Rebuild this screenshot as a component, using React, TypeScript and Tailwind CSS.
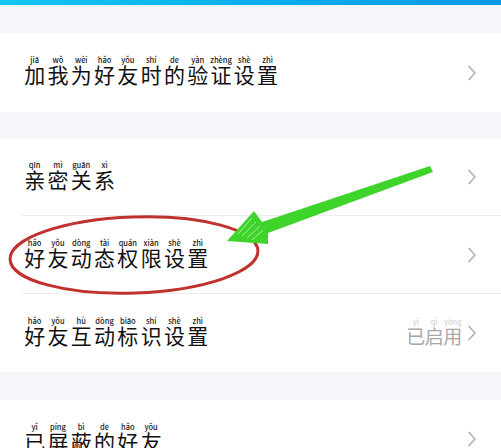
import React from 'react';

type Ch = [string, string];

const rows1: Ch[] = [
    ['加', 'jiā'], ['我', 'wǒ'], ['为', 'wèi'], ['好', 'hǎo'], ['友', 'yǒu'], ['时', 'shí'],
    ['的', 'de'], ['验', 'yàn'], ['证', 'zhèng'], ['设', 'shè'], ['置', 'zhì'],
];
const rowQinmi: Ch[] = [['亲', 'qīn'], ['密', 'mì'], ['关', 'guān'], ['系', 'xì']];
const rowDongtai: Ch[] = [
    ['好', 'hǎo'], ['友', 'yǒu'], ['动', 'dòng'], ['态', 'tài'], ['权', 'quán'], ['限', 'xiàn'], ['设', 'shè'], ['置', 'zhì'],
];
const rowHudong: Ch[] = [
    ['好', 'hǎo'], ['友', 'yǒu'], ['互', 'hù'], ['动', 'dòng'], ['标', 'biāo'], ['识', 'shí'], ['设', 'shè'], ['置', 'zhì'],
];
const rowPingbi: Ch[] = [['已', 'yǐ'], ['屏', 'píng'], ['蔽', 'bì'], ['的', 'de'], ['好', 'hǎo'], ['友', 'yǒu']];
const enabled: Ch[] = [['已', 'yǐ'], ['启', 'qǐ'], ['用', 'yòng']];

const Pinyin = ({ chars, muted }: { chars: Ch[]; muted?: boolean }) => (
    <div className="flex -translate-y-[2px]">
        {chars.map(([c, p], i) => (
            <div key={i} className={`flex flex-col items-center ${muted ? 'w-[18.5px]' : 'w-[23.3px]'}`}>
                <span className={`text-[7.5px] leading-[8px] whitespace-nowrap font-medium ${muted ? 'text-[#d4d4d4]' : 'text-[#1a1a1a]'}`}>{p}</span>
                <span className={`leading-none ${muted ? 'text-[19px] text-[#a8a8a8]' : 'text-[21px] text-[#111]'}`}>{c}</span>
            </div>
        ))}
    </div>
);

const Chevron = () => (
    <svg width="10" height="16" viewBox="0 0 10 16" className="shrink-0">
        <path d="M2 1.5 L8 8 L2 14.5" fill="none" stroke="#b5b5b5" strokeWidth="1.8" strokeLinecap="round" strokeLinejoin="round" />
    </svg>
);

const Row = ({ chars, right, divider, h = 'h-[78px]' }: { chars: Ch[]; right?: React.ReactNode; divider?: boolean; h?: string }) => (
    <div className={`relative flex items-center justify-between pl-[23px] pr-[24px] bg-white ${h}`}>
        <Pinyin chars={chars} />
        <div className="flex items-center gap-[5px]">
            {right}
            <Chevron />
        </div>
        {divider && <div className="absolute bottom-0 left-[22px] right-0 h-px bg-[#ececec]" />}
    </div>
);

export default function App() {
    return (
        <div className="relative w-[501px] h-[448px] overflow-hidden bg-[#f5f6fa]" style={{ fontFamily: '"Noto Sans CJK SC", "Noto Sans", sans-serif' }}>
            <div className="h-[5px] bg-gradient-to-r from-[#14c6f3] to-[#0b98e6]" />
            <div className="h-[28px]" />
            <Row chars={rows1} h="h-[79px]" />
            <div className="h-[26px]" />
            <Row chars={rowQinmi} divider />
            <Row chars={rowDongtai} divider />
            <Row chars={rowHudong} right={<Pinyin chars={enabled} muted />} />
            <div className="h-[28px]" />
            <Row chars={rowPingbi} />

            {/* annotations drawn over the screen */}
            <svg className="absolute inset-0 pointer-events-none" width="501" height="448" viewBox="0 0 501 448">
                <ellipse cx="134" cy="255" rx="124" ry="38" fill="none" stroke="#c0322d" strokeWidth="3" transform="rotate(-2 134 255)" />
                <polygon
                    points="227,241 254,211 262,222 430,166 433,172 268,233 268,244"
                    fill="#3fd42b"
                />
                <path d="M238 234 L252 218 M242 236 L256 222 M247 238 L260 226 M252 240 L263 230" stroke="#d8f7cf" strokeWidth="1" opacity="0.7" />
            </svg>
        </div>
    );
}
